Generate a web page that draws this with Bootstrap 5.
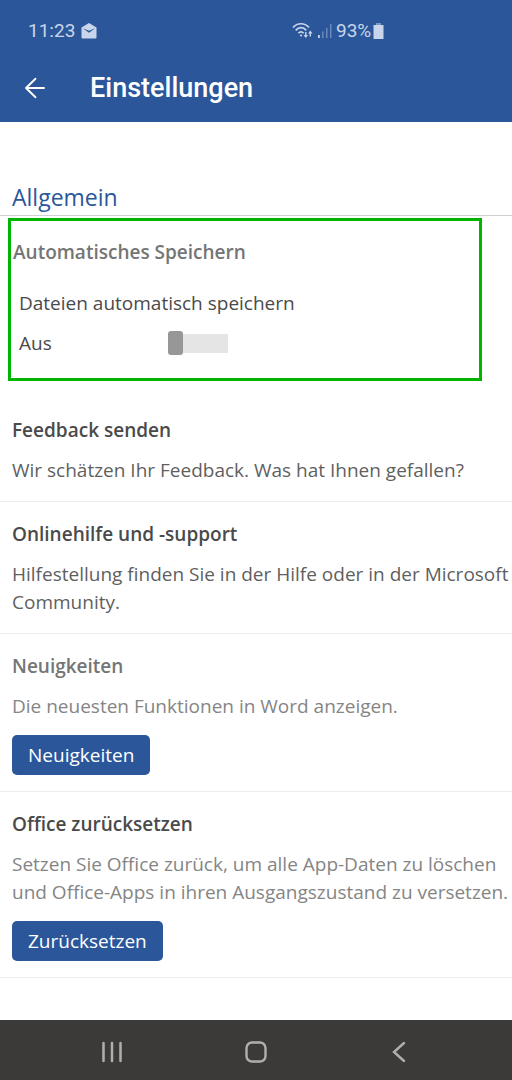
<!DOCTYPE html>
<html lang="de">
<head>
<meta charset="utf-8">
<meta name="viewport" content="width=device-width, initial-scale=1">
<title>Einstellungen</title>
<link href="https://cdn.jsdelivr.net/npm/bootstrap@5.3.0/dist/css/bootstrap.min.css" rel="stylesheet">
<style>
  :root { --word-blue: #2b579a; --ink: #4a4a4a; --ink-soft: #757575; }
  body { font-family: "Open Sans", "Noto Sans", sans-serif; font-size: 19px; line-height: 28px; color: var(--ink); background: #fff; }
  .app-header { background: var(--word-blue); font-family: Roboto, sans-serif; padding: 18px 28px 0 24px; }
  .status-bar { height: 26px; font-size: 19px; line-height: 26px; color: #c9d5ea; padding-left: 4px; }
  .status-side { width: 50%; }
  .status-left { gap: 6px; }
  .status-right { padding-left: 36px; }
  .title-bar { height: 68px; margin-top: 10px; gap: 44px; }
  .title-bar h1 { font-size: 27px; line-height: 36px; font-weight: 500; color: #fff; }
  .icon-button { background: none; border: 0; padding: 0; line-height: 0; }
  .group-heading { font-size: 23px; line-height: 32px; font-weight: 400; color: var(--word-blue); padding: 59px 12px 2px; border-bottom: 1px solid #d0d0d0; }
  .autosave { margin: 2px 30px 17px 8px; padding: 17px 8px 21px; border: 3px solid #00b400; }
  .autosave .item-title { margin-left: -6px; margin-bottom: 23px; }
  .item-title { font-size: 19px; line-height: 28px; font-weight: 600; margin-bottom: 12px; }
  .switch-row { padding-top: 12px; gap: 116px; }
  .slide-toggle { appearance: none; width: 60px; height: 24px; background: linear-gradient(#e5e5e5, #e5e5e5) center / 100% 19px no-repeat; }
  .slide-toggle::before { content: ""; display: block; width: 15px; height: 24px; border-radius: 3px; background: #979797; }
  .slide-toggle:checked::before { margin-left: auto; background: var(--word-blue); }
  .settings-item { padding: 18px 0 16px 12px; border-bottom: 1px solid #ececec; }
  .item-text { color: #5f5f5f; padding-bottom: 1px; }
  .soft { color: var(--ink-soft); }
  .item-text.soft { color: #858585; }
  .btn-word { --bs-btn-color: #fff; --bs-btn-bg: #2b579a; --bs-btn-hover-color: #fff; --bs-btn-hover-bg: #234a85; --bs-btn-border-radius: 5px; font-size: 19px; line-height: 28px; padding: 6px 16px; border: 0; margin-top: 14px; }
  .system-nav { background: #3c3a38; height: 60px; padding: 0 40px; }
</style>
</head>
<body>
<div class="d-flex flex-column min-vh-100">
  <header class="app-header">
    <div class="status-bar d-flex">
      <div class="status-side status-left d-flex align-items-center">
        <span>11:23</span>
        <svg width="16" height="16" viewBox="0 0 16 16" aria-hidden="true"><path d="M8 0 15.500 4.500v10a1 1 0 0 1-1 1h-13a1 1 0 0 1-1-1v-10z" fill="#c9d5ea"/><path d="M1.800 5.200 8 7.800l6.200-2.600L8 9.800z" fill="#2b579a"/></svg>
      </div>
      <div class="status-side status-right d-flex align-items-center">
        <svg width="22" height="18" viewBox="0 0 22 18" fill="none" stroke="#c9d5ea" stroke-width="1.700" aria-hidden="true"><path d="M1 5.500C5.500.5 12.500.5 17 5.500M3.700 8.400c3.200-3.600 7.400-3.600 10.600 0M6.400 11.200c1.500-1.700 3.700-1.700 5.200 0"/><circle cx="9" cy="13.500" r="1.100" fill="#c9d5ea" stroke="none"/><path d="M13.800 10v4.500M18.300 14.500V10" stroke-width="1.400"/><path d="M11.600 13h4.400l-2.200 3zM16.100 11.500h4.400l-2.200-3z" fill="#c9d5ea" stroke="none"/></svg>
        <svg class="ms-1" width="14" height="16" viewBox="0 0 14 16" fill="#c9d5ea" aria-hidden="true"><path d="M0 12h1.800v3H0z"/><path d="M4 8.500h1.500V15H4zM8 5h1.500v10H8zM12 1h1.500v14H12z" opacity=".4"/></svg>
        <span class="ms-1">93%</span>
        <svg width="13" height="16" viewBox="0 0 13 16" fill="#c9d5ea" aria-hidden="true"><path d="M5 0h5v2H5z" opacity=".5"/><path d="M2.500 2h10v14h-10z"/></svg>
      </div>
    </div>
    <div class="title-bar d-flex align-items-center">
      <button class="icon-button" type="button" aria-label="Zurück"><svg width="22" height="22" viewBox="0 0 22 22" fill="none" stroke="#fff" stroke-width="1.900" stroke-linecap="round" stroke-linejoin="round"><path d="M20 11H2M11.500 1.800 2 11l9.500 9.200"/></svg></button>
      <h1 class="m-0">Einstellungen</h1>
    </div>
  </header>

  <main class="flex-grow-1">
    <h2 class="group-heading m-0">Allgemein</h2>
    <section class="autosave">
      <h3 class="item-title soft">Automatisches Speichern</h3>
      <label class="d-block" for="autosave">Dateien automatisch speichern</label>
      <div class="switch-row d-flex align-items-center">
        <span>Aus</span>
        <input class="slide-toggle m-0" type="checkbox" role="switch" id="autosave">
      </div>
    </section>
    <section class="settings-item">
      <h3 class="item-title">Feedback senden</h3>
      <p class="item-text m-0">Wir schätzen Ihr Feedback. Was hat Ihnen gefallen?</p>
    </section>
    <section class="settings-item">
      <h3 class="item-title">Onlinehilfe und -support</h3>
      <p class="item-text m-0">Hilfestellung finden Sie in der Hilfe oder in der Microsoft Community.</p>
    </section>
    <section class="settings-item">
      <h3 class="item-title soft">Neuigkeiten</h3>
      <p class="item-text soft m-0">Die neuesten Funktionen in Word anzeigen.</p>
      <button class="btn btn-word" type="button">Neuigkeiten</button>
    </section>
    <section class="settings-item">
      <h3 class="item-title">Office zurücksetzen</h3>
      <p class="item-text soft m-0">Setzen Sie Office zurück, um alle App-Daten zu löschen und Office-Apps in ihren Ausgangszustand zu versetzen.</p>
      <button class="btn btn-word" type="button">Zurücksetzen</button>
    </section>
  </main>

  <nav class="system-nav d-flex align-items-center" aria-label="Navigation">
    <div class="row g-0 w-100 text-center">
      <div class="col"><button class="icon-button" type="button" aria-label="Letzte Apps"><svg width="22" height="22" viewBox="0 0 22 22" stroke="#b0afae" stroke-width="2.500" stroke-linecap="round"><path d="M2.500 2v18M11 2v18M19.500 2v18"/></svg></button></div>
      <div class="col"><button class="icon-button" type="button" aria-label="Startseite"><svg width="22" height="22" viewBox="0 0 22 22" fill="none" stroke="#b0afae" stroke-width="2.400"><rect x="1.500" y="1.500" width="19" height="19" rx="5.500"/></svg></button></div>
      <div class="col"><button class="icon-button" type="button" aria-label="Zurück"><svg width="22" height="22" viewBox="0 0 22 22" fill="none" stroke="#b0afae" stroke-width="2.400" stroke-linecap="round"><path d="M15 2 5 11l10 9"/></svg></button></div>
    </div>
  </nav>
</div>
<script src="https://cdn.jsdelivr.net/npm/bootstrap@5.3.0/dist/js/bootstrap.bundle.min.js"></script>
</body>
</html>
